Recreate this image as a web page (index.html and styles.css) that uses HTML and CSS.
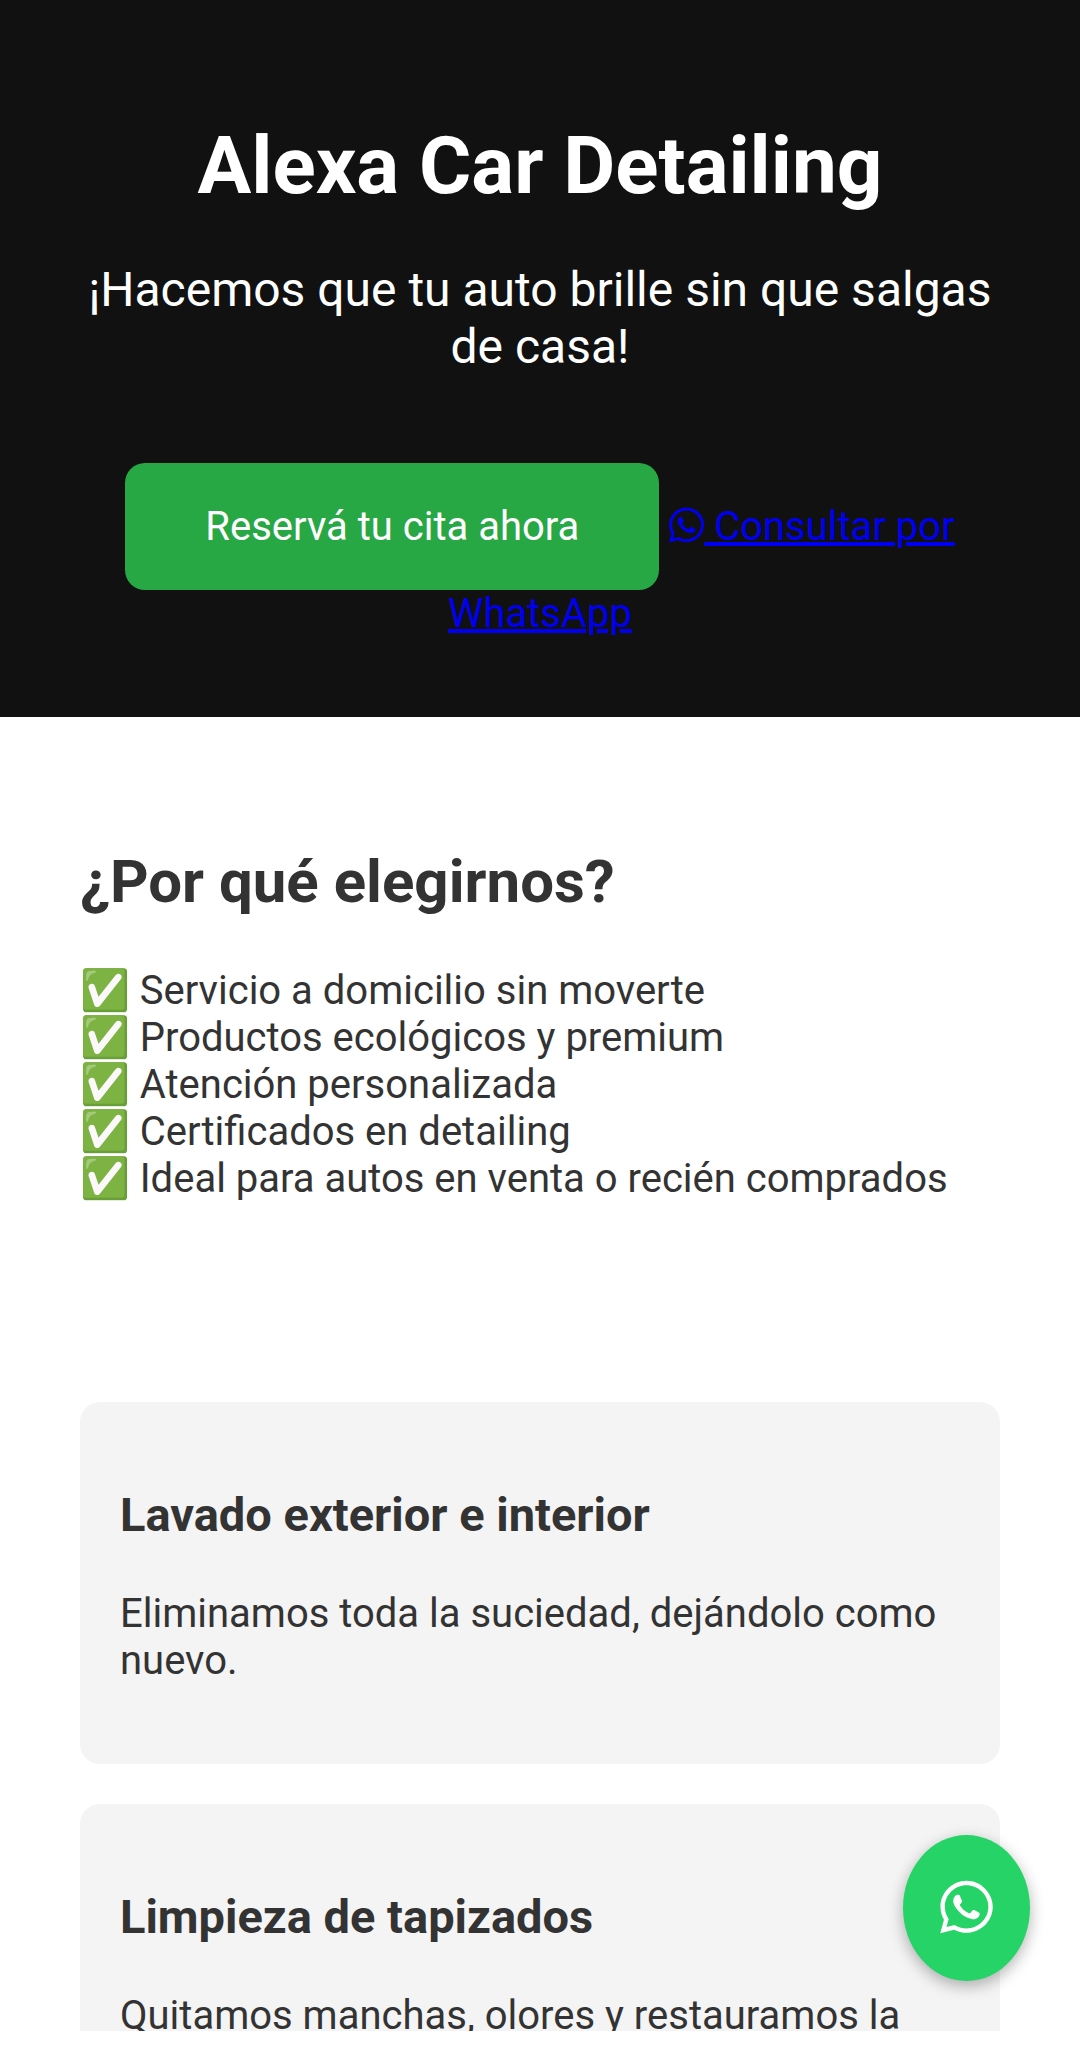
FILE: index.html
```html
<!DOCTYPE html>
<html lang="es">
<head>
<meta charset="utf-8">
<meta name="viewport" content="width=device-width, initial-scale=1">
<title>Alexa Car Detailing</title>
<link rel="stylesheet" href="styles.css">
</head>
<body>
<svg class="sprite" aria-hidden="true">
  <symbol id="whatsapp" viewBox="0 0 448 512">
    <path d="M380.9 97.1C339 55.1 283.2 32 223.9 32c-122.4 0-222 99.6-222 222 0 39.1 10.2 77.3 29.6 111L0 480l117.7-30.9c32.4 17.7 68.9 27 106.1 27h.1c122.3 0 224.1-99.6 224.1-222 0-59.3-25.2-115-67.1-157zm-157 341.6c-33.2 0-65.7-8.9-94-25.7l-6.7-4-69.8 18.3L72 359.2l-4.4-7c-18.5-29.4-28.2-63.3-28.2-98.2 0-101.7 82.8-184.5 184.6-184.5 49.3 0 95.6 19.2 130.4 54.1 34.8 34.9 56.2 81.2 56.1 130.5 0 101.8-84.9 184.6-186.6 184.6zm101.2-138.2c-5.5-2.8-32.8-16.2-37.9-18-5.1-1.9-8.8-2.8-12.5 2.8-3.7 5.6-14.3 18-17.6 21.8-3.2 3.7-6.5 4.2-12 1.4-32.6-16.3-54-29.1-75.5-66-5.7-9.8 5.7-9.1 16.3-30.3 1.8-3.7.9-6.9-.5-9.7-1.4-2.8-12.5-30.1-17.1-41.2-4.5-10.8-9.1-9.3-12.5-9.5-3.2-.2-6.9-.2-10.6-.2-3.7 0-9.7 1.4-14.8 6.9-5.1 5.6-19.4 19-19.4 46.3 0 27.3 19.9 53.7 22.6 57.4 2.8 3.7 39.1 59.7 94.8 83.8 35.2 15.2 49 16.5 66.6 13.9 10.7-1.6 32.8-13.4 37.4-26.4 4.6-13 4.6-24.1 3.2-26.4-1.3-2.5-5-3.9-10.5-6.6z"/>
  </symbol>
</svg>
<div class="page">
  <header class="hero">
    <h1 class="hero-title">Alexa Car Detailing</h1>
    <p class="hero-text">¡Hacemos que tu auto brille sin que salgas de casa!</p>
    <a class="btn" href="#reserva">Reservá tu cita ahora</a>
    <a href="#whatsapp-chat"><svg class="link-icon" aria-hidden="true"><use href="#whatsapp"/></svg> Consultar por WhatsApp</a>
  </header>
  <main>
    <section class="section">
      <h2 class="section-title">¿Por qué elegirnos?</h2>
      <ul class="benefits">
        <li>✅ Servicio a domicilio sin moverte</li>
        <li>✅ Productos ecológicos y premium</li>
        <li>✅ Atención personalizada</li>
        <li>✅ Certificados en detailing</li>
        <li>✅ Ideal para autos en venta o recién comprados</li>
      </ul>
    </section>
    <section class="section services">
      <article class="card">
        <h3 class="card-title">Lavado exterior e interior</h3>
        <p class="card-text">Eliminamos toda la suciedad, dejándolo como nuevo.</p>
      </article>
      <article class="card">
        <h3 class="card-title">Limpieza de tapizados</h3>
        <p class="card-text">Quitamos manchas, olores y restauramos la frescura.</p>
      </article>
    </section>
  </main>
</div>
<a class="fab" href="#whatsapp-chat" aria-label="WhatsApp"><svg class="fab-icon" aria-hidden="true"><use href="#whatsapp"/></svg></a>
</body>
</html>
```
FILE: styles.css
```css
* {
  box-sizing: border-box;
}

body {
  margin: 0;
  background: #fff;
  color: #333;
  font: 40px/47px Roboto, "Noto Color Emoji", sans-serif;
}

.sprite {
  position: absolute;
  width: 0;
  height: 0;
}

.page {
  height: calc(100vh - 21px);
  overflow: hidden;
}

.hero {
  padding: 119px 80px 80px;
  background: #111;
  color: #fff;
  text-align: center;
}

.hero-title {
  margin: 0 0 48px;
  font-size: 80px;
  line-height: 94px;
}

.hero-text {
  margin: 0 0 88px;
  font-size: 48px;
  line-height: 57px;
}

.hero a {
  color: #0000ee;
}

.hero .btn {
  display: inline-block;
  padding: 40px 80px;
  border-radius: 20px;
  background: #28a745;
  color: #fff;
  text-decoration: none;
}

.link-icon {
  width: 35px;
  height: 40px;
  vertical-align: -5px;
  fill: currentColor;
}

.section {
  padding: 80px;
}

.section-title {
  margin: 50px 0;
  font-size: 60px;
  line-height: 70px;
}

.benefits {
  margin: 0 0 40px;
  padding: 0;
  list-style: none;
}

.services {
  display: flex;
  flex-direction: column;
  gap: 40px;
}

.card {
  padding: 40px;
  border-radius: 20px;
  background: #f4f4f4;
}

.card-title {
  margin: 45px 0 48px;
  font-size: 47px;
  line-height: 55px;
}

.card-text {
  margin: 0 0 40px;
}

.fab {
  position: fixed;
  right: 50px;
  bottom: 71px;
  display: flex;
  padding: 42px 37px 44px;
  border-radius: 50%;
  background: #25d366;
  color: #fff;
  box-shadow: 0 5px 15px rgba(0, 0, 0, 0.3);
}

.fab-icon {
  width: 53px;
  height: 60px;
  fill: currentColor;
}
```
